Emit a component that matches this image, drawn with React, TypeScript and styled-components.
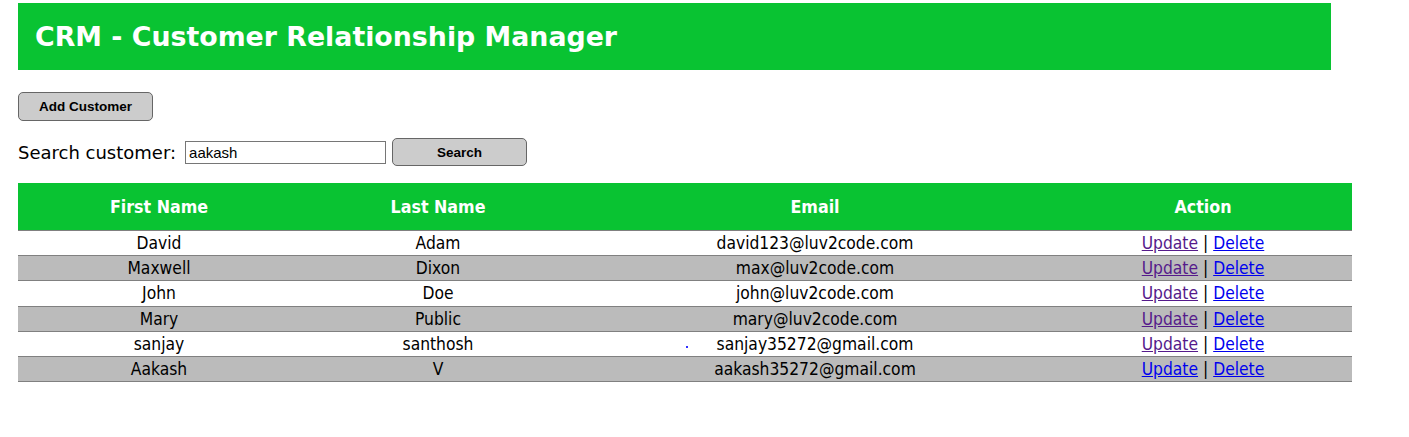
import React from "react";
import styled, { createGlobalStyle } from "styled-components";

const GlobalStyle = createGlobalStyle`
  html, body {
    margin: 0;
    padding: 0;
    background: #ffffff;
    font-family: "DejaVu Sans", Verdana, sans-serif;
  }
`;

const Page = styled.div`
  padding: 3px 0 0 18px;
`;

const Header = styled.header`
  box-sizing: border-box;
  width: 1313px;
  height: 67px;
  background: #09c332;
  padding-left: 17px;
  display: flex;
  align-items: center;
`;

const Title = styled.h2`
  margin: 0;
  color: #ffffff;
  font-family: "DejaVu Sans", Verdana, sans-serif;
  font-weight: bold;
  font-size: 26.8px;
`;

const Content = styled.div`
  display: flex;
  flex-direction: column;
  align-items: flex-start;
  padding-top: 22px;
`;

const GrayButton = styled.button<{ $w: number; $h: number }>`
  box-sizing: border-box;
  width: ${(p) => p.$w}px;
  height: ${(p) => p.$h}px;
  background: #cccccc;
  border: 1px solid #666666;
  border-radius: 5px;
  font-family: "Liberation Sans", Arial, sans-serif;
  font-weight: bold;
  font-size: 13.5px;
  color: #000000;
  padding: 0;
  cursor: pointer;
`;

const SearchForm = styled.form`
  display: flex;
  align-items: center;
  margin-top: 17px;
  height: 28px;
`;

const Label = styled.span`
  font-family: "DejaVu Sans", Verdana, sans-serif;
  font-size: 18px;
  color: #000000;
  margin-right: 9px;
`;

const Input = styled.input`
  box-sizing: border-box;
  width: 201px;
  height: 23px;
  border: 1px solid #767676;
  padding: 0 3px;
  font-family: "Liberation Sans", Arial, sans-serif;
  font-size: 15px;
  color: #000000;
  margin-right: 6px;
  outline: none;
`;

const Table = styled.table`
  margin-top: 17px;
  border-collapse: collapse;
  width: 1334px;
  table-layout: fixed;
  border-bottom: 1px solid #808080;
  font-family: "DejaVu Sans Condensed", "DejaVu Sans", sans-serif;
`;

const Th = styled.th<{ $w: number }>`
  width: ${(p) => p.$w}px;
  background: #09c332;
  color: #ffffff;
  font-weight: bold;
  font-size: 17.7px;
  height: 47px;
  padding: 0;
  text-align: center;
`;

const Row = styled.tr<{ $alt: boolean }>`
  background: ${(p) => (p.$alt ? "#bbbbbb" : "#ffffff")};
  border-top: 1px solid #808080;
  text-align: center;
`;

const Td = styled.td`
  position: relative;
  height: 24.2px;
  padding: 0;
  font-size: 17.3px;
  color: #000000;
  line-height: 24px;
`;

const Link = styled.a<{ $visited?: boolean }>`
  color: ${(p) => (p.$visited ? "#551a8b" : "#0000ee")};
  text-decoration: underline;
`;

const Dot = styled.span`
  position: absolute;
  left: 110px;
  top: 14px;
  width: 2px;
  height: 2px;
  background: #3030ff;
`;

const customers = [
  { first: "David", last: "Adam", email: "david123@luv2code.com", visited: true },
  { first: "Maxwell", last: "Dixon", email: "max@luv2code.com", visited: true },
  { first: "John", last: "Doe", email: "john@luv2code.com", visited: true },
  { first: "Mary", last: "Public", email: "mary@luv2code.com", visited: true },
  { first: "sanjay", last: "santhosh", email: "sanjay35272@gmail.com", visited: true, dot: true },
  { first: "Aakash", last: "V", email: "aakash35272@gmail.com", visited: false },
];

export default function App() {
  return (
    <>
      <GlobalStyle />
      <Page>
        <Header>
          <Title>CRM - Customer Relationship Manager</Title>
        </Header>
        <Content>
          <GrayButton $w={135} $h={29} type="button">
            Add Customer
          </GrayButton>
          <SearchForm onSubmit={(e) => e.preventDefault()}>
            <Label>Search customer:</Label>
            <Input type="text" defaultValue="aakash" />
            <GrayButton $w={135} $h={28} type="submit">
              Search
            </GrayButton>
          </SearchForm>
          <Table>
            <thead>
              <tr>
                <Th $w={282}>First Name</Th>
                <Th $w={276}>Last Name</Th>
                <Th $w={478}>Email</Th>
                <Th $w={298}>Action</Th>
              </tr>
            </thead>
            <tbody>
              {customers.map((c, i) => (
                <Row key={c.email} $alt={i % 2 === 1}>
                  <Td>{c.first}</Td>
                  <Td>{c.last}</Td>
                  <Td>
                    {c.dot && <Dot />}
                    {c.email}
                  </Td>
                  <Td>
                    <Link href="#" $visited={c.visited}>
                      Update
                    </Link>{" "}
                    |{" "}
                    <Link href="#">Delete</Link>
                  </Td>
                </Row>
              ))}
            </tbody>
          </Table>
        </Content>
      </Page>
    </>
  );
}
